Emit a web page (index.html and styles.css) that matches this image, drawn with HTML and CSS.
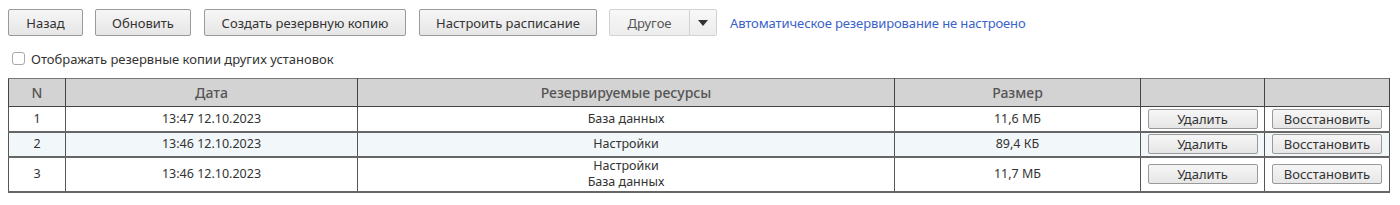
FILE: index.html
```html
<!DOCTYPE html>
<html lang="ru">
<head>
<meta charset="utf-8">
<title>Резервные копии</title>
<link rel="stylesheet" href="styles.css">
</head>
<body>
<div class="page">
  <div class="toolbar">
    <button class="btn btn-back">Назад</button>
    <button class="btn btn-refresh">Обновить</button>
    <button class="btn btn-create">Создать резервную копию</button>
    <button class="btn btn-schedule">Настроить расписание</button>
    <div class="split">
      <button class="split-main">Другое</button>
      <button class="split-arrow"><span class="caret"></span></button>
    </div>
    <a class="status-link" href="#">Автоматическое резервирование не настроено</a>
  </div>
  <label class="check-row">
    <span class="checkbox"></span>
    <span>Отображать резервные копии других установок</span>
  </label>
  <table class="grid">
    <colgroup>
      <col class="c-n"><col class="c-date"><col class="c-res"><col class="c-size"><col class="c-del"><col class="c-rest">
    </colgroup>
    <thead>
      <tr><th>N</th><th>Дата</th><th>Резервируемые ресурсы</th><th>Размер</th><th></th><th></th></tr>
    </thead>
    <tbody>
      <tr class="r1">
        <td>1</td><td>13:47 12.10.2023</td><td>База данных</td><td>11,6 МБ</td>
        <td><button class="tbtn">Удалить</button></td><td><button class="tbtn">Восстановить</button></td>
      </tr>
      <tr class="r2 alt">
        <td>2</td><td>13:46 12.10.2023</td><td>Настройки</td><td>89,4 КБ</td>
        <td><button class="tbtn">Удалить</button></td><td><button class="tbtn">Восстановить</button></td>
      </tr>
      <tr class="r3">
        <td>3</td><td>13:46 12.10.2023</td><td>Настройки<br>База данных</td><td>11,7 МБ</td>
        <td><button class="tbtn">Удалить</button></td><td><button class="tbtn">Восстановить</button></td>
      </tr>
    </tbody>
  </table>
</div>
</body>
</html>
```
FILE: styles.css
```css
* { box-sizing: border-box; }
html, body { margin: 0; padding: 0; background: #fff; }
body {
  font-family: "Noto Sans", "Open Sans", "Liberation Sans", sans-serif;
  font-size: 13px;
  color: #333;
}
.page { padding: 9px 9px 0 8px; }

.toolbar {
  display: flex;
  align-items: center;
  gap: 12px;
  height: 27px;
}
.btn {
  font: inherit;
  color: #333;
  height: 27px;
  padding: 0;
  border: 1px solid #9a9a9a;
  border-radius: 2px;
  background: linear-gradient(#f6f6f6, #e6e6e6);
  cursor: pointer;
}
.btn-back { width: 75px; }
.btn-refresh { width: 96px; }
.btn-create { width: 202px; margin-left: 1px; }
.btn-schedule { width: 178px; margin-left: 1px; }

.split { display: flex; height: 27px; }
.split-main, .split-arrow {
  font: inherit;
  color: #555;
  height: 27px;
  padding: 0;
  border: 1px solid #d2d2d2;
  background: linear-gradient(#f8f8f8, #ececec);
}
.split-main { width: 81px; border-radius: 2px 0 0 2px; }
.split-arrow {
  width: 27px;
  border-left: none;
  border-radius: 0 2px 2px 0;
  display: flex;
  align-items: center;
  justify-content: center;
}
.caret {
  width: 0; height: 0;
  border-left: 5px solid transparent;
  border-right: 5px solid transparent;
  border-top: 6px solid #333;
}
.status-link {
  color: #3a62c8;
  text-decoration: none;
  margin-left: 1px;
  letter-spacing: -0.1px;
}

.check-row {
  display: flex;
  align-items: center;
  gap: 6px;
  margin: 14px 0 0 4px;
  height: 17px;
}
.checkbox {
  width: 13px; height: 13px;
  border: 1px solid #a8a8a8;
  border-radius: 3px;
  background: #fff;
}

.grid {
  margin-top: 11px;
  border-collapse: collapse;
  width: 1381px;
  table-layout: fixed;
  border: 1px solid #777;
  border-bottom: 2px solid #777;
}
.c-n { width: 57px; }
.c-date { width: 292px; }
.c-res { width: 537px; }
.c-size { width: 246px; }
.c-del { width: 124px; }
.c-rest { width: 125px; }
.grid th {
  background: #d3d3d3;
  color: #555;
  font-weight: 500;
  font-size: 14px;
  height: 28px;
  border: 1px solid #444;
  border-top: 1px solid #777;
  padding: 0;
  text-align: center;
}
.grid td {
  border: 1px solid #555;
  border-bottom: 2px solid #666;
  padding: 0;
  text-align: center;
  line-height: 16px;
  font-size: 12.5px;
  color: #333;
}
.grid tr.r1 td { height: 25px; }
.grid tr.r2 td { height: 25px; }
.grid tr.r3 td { height: 35px; }
.grid tr.alt td { background: #f2f7fa; }
.tbtn {
  font: inherit;
  font-size: 13px;
  color: #333;
  width: 110px;
  height: 20px;
  padding: 0;
  border: 1px solid #9a9a9a;
  border-radius: 2px;
  background: linear-gradient(#f6f6f6, #e6e6e6);
  display: block;
  margin: 0 auto;
}
```
